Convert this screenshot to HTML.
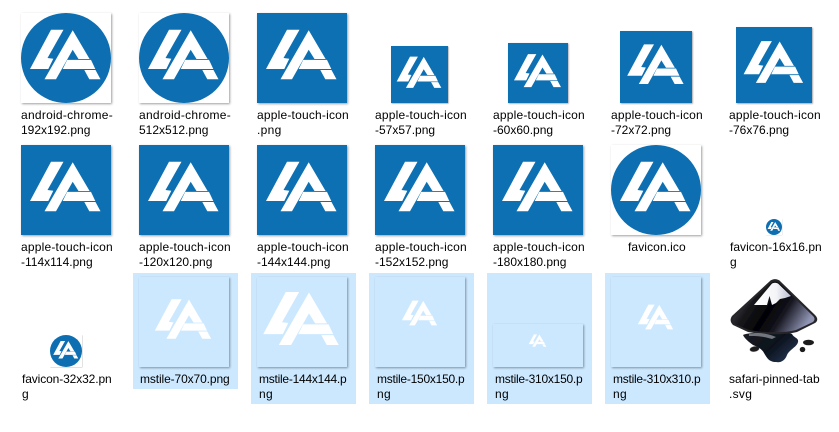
<!DOCTYPE html>
<html><head><meta charset="utf-8"><style>
html,body{margin:0;padding:0;background:#fff;width:839px;height:432px;overflow:hidden}
svg{display:block}
text{font-family:"Liberation Sans",sans-serif;font-size:12px;letter-spacing:.3px;fill:#000}
text.d{letter-spacing:0}
</style></head><body>
<svg width="839" height="432" viewBox="0 0 839 432" xmlns="http://www.w3.org/2000/svg">
<defs>
<filter id="sh" x="-10%" y="-10%" width="125%" height="125%"><feDropShadow dx="1" dy="1" stdDeviation="1" flood-color="#000" flood-opacity=".38"/></filter>
<filter id="b" x="-5%" y="-5%" width="110%" height="110%"><feGaussianBlur stdDeviation=".35"/></filter>
<linearGradient id="dia" x1="0" y1=".2" x2="1" y2=".6"><stop offset="0" stop-color="#55555c"/><stop offset=".28" stop-color="#17171b"/><stop offset=".5" stop-color="#030305"/><stop offset=".68" stop-color="#14141e"/><stop offset="1" stop-color="#9095b4"/></linearGradient>
<linearGradient id="ink" x1="0" y1="0" x2="1" y2=".6"><stop offset="0" stop-color="#1d1d22"/><stop offset=".6" stop-color="#0a111c"/><stop offset="1" stop-color="#22324a"/></linearGradient>
<linearGradient id="snow" x1="0" y1="0" x2="1" y2="0"><stop offset="0" stop-color="#fff"/><stop offset=".6" stop-color="#f4f4f8"/><stop offset="1" stop-color="#b8bcd2"/></linearGradient>
<g id="lg" fill="#fff" filter="url(#b)">
<polygon points="30,16.7 42.5,16.7 26.5,45 32.3,45.7 27.3,56 9,56"/>
<polygon points="51.7,17.2 68.6,46 57.5,46 51.7,36.7 35,66.2 23.5,66.2"/>
<polygon points="46.2,46.9 70,46.9 74.3,56 41.7,56"/>
<polygon points="63.3,57 74.5,57 79.5,66.2 68.3,66.2"/>
</g>
<g id="ci"><rect width="90" height="90" fill="#fff" filter="url(#sh)"/><circle cx="45" cy="45" r="45" fill="#0d6fb2"/><use href="#lg"/></g>
<g id="sq"><rect width="90" height="90" fill="#0d6fb2" filter="url(#sh)"/><use href="#lg"/></g>
</defs>
<rect width="839" height="432" fill="#fff"/>

<use href="#ci" x="21" y="13"/>
<use href="#ci" x="139" y="13"/>
<use href="#sq" x="257" y="13"/>
<use href="#sq" transform="translate(391,46) scale(.6333)"/>
<use href="#sq" transform="translate(508,43) scale(.6667)"/>
<use href="#sq" transform="translate(620,31) scale(.8)"/>
<use href="#sq" transform="translate(736,27) scale(.8444)"/>

<use href="#sq" x="21" y="145"/>
<use href="#sq" x="139" y="145"/>
<use href="#sq" x="257" y="145"/>
<use href="#sq" x="375" y="145"/>
<use href="#sq" x="493" y="145"/>
<use href="#ci" x="611" y="145"/>
<g transform="translate(766,219) scale(.1778)"><use href="#ci"/></g>
<g transform="translate(50,335) scale(.3556)"><use href="#ci"/></g>

<rect x="133" y="273" width="105" height="116" fill="#cce8ff"/>
<rect x="251" y="273" width="105" height="131" fill="#cce8ff"/>
<rect x="369" y="273" width="105" height="131" fill="#cce8ff"/>
<rect x="487" y="273" width="105" height="131" fill="#cce8ff"/>
<rect x="605" y="273" width="105" height="131" fill="#cce8ff"/>

<rect x="139" y="277" width="90" height="90" fill="#cce8ff" filter="url(#sh)"/>
<rect x="257" y="277" width="90" height="90" fill="#cce8ff" filter="url(#sh)"/>
<rect x="375" y="277" width="90" height="90" fill="#cce8ff" filter="url(#sh)"/>
<rect x="493" y="324" width="90" height="43" fill="#cce8ff" filter="url(#sh)"/>
<rect x="611" y="277" width="90" height="90" fill="#cce8ff" filter="url(#sh)"/>

<use href="#lg" transform="translate(183,319) scale(.8) translate(-44.25,-41.45)"/>
<use href="#lg" transform="translate(301,318.5) scale(1.07) translate(-44.25,-41.45)"/>
<use href="#lg" transform="translate(419.5,313) scale(.5) translate(-44.25,-41.45)"/>
<use href="#lg" transform="translate(537.5,340.5) scale(.25) translate(-44.25,-41.45)"/>
<use href="#lg" transform="translate(655.5,317) scale(.5) translate(-44.25,-41.45)"/>

<!-- inkscape -->
<path d="M743,335 C748,332 785,330 792,334 C794,338 799,338 798,342 C797,347 790,349 787,355 C785,361 780,363 776,362 C769,362 767,358 764,353 C762,349 758,347 753,345 C749,342 745,339 743,335 Z" fill="url(#ink)" filter="url(#b)"/>
<path d="M770,281 C773,278.5 777,278.5 780,281 L815,315 C818,318 818,321 815,323 L797,332 C785,335 765,335 748,332 L733,325 C730,322 730,319 732,316 Z" fill="#26262b" filter="url(#b)"/>
<path d="M771,283 C773,281 777,281 779,283 L813,316 C815,318 815,320 813,322 L796,330 C785,333 765,333 749,330 L735,324 C733,322 733,319 734,317 Z" fill="url(#dia)" filter="url(#b)"/>
<path d="M772,283.5 C774,282.5 776,282.5 778,283.5 L791,296 L785,298 L780,299 L776,303 L772,305 L769.5,296 L767,305 L754,305 Z" fill="url(#snow)" filter="url(#b)"/>
<path d="M749,334 C757,332 767,333 776,337 L772,339 C762,336 756,336 749,336 Z" fill="#71757e" filter="url(#b)"/>
<ellipse cx="754.5" cy="349" rx="4.8" ry="2.6" fill="#1a1a1f" filter="url(#b)" transform="rotate(-10 754.5 349)"/>
<ellipse cx="808.5" cy="342.5" rx="5.5" ry="2.8" fill="#1a1a1f" filter="url(#b)"/>
<ellipse cx="802.5" cy="349.5" rx="2.8" ry="2.6" fill="#1a1a1f" filter="url(#b)"/>

<text x="21" y="119" textLength="92">android-chrome-</text><text x="21" y="134" class="d">192x192.png</text>
<text x="139" y="119" textLength="92">android-chrome-</text><text x="139" y="134" class="d">512x512.png</text>
<text x="257" y="119" textLength="92">apple-touch-icon</text><text x="257" y="134">.png</text>
<text x="375" y="119" textLength="92">apple-touch-icon</text><text x="375" y="134" class="d">-57x57.png</text>
<text x="493" y="119" textLength="92">apple-touch-icon</text><text x="493" y="134" class="d">-60x60.png</text>
<text x="611" y="119" textLength="92">apple-touch-icon</text><text x="611" y="134" class="d">-72x72.png</text>
<text x="729" y="119" textLength="92">apple-touch-icon</text><text x="729" y="134" class="d">-76x76.png</text>

<text x="21" y="251" textLength="92">apple-touch-icon</text><text x="21" y="266" class="d">-114x114.png</text>
<text x="139" y="251" textLength="92">apple-touch-icon</text><text x="139" y="266" class="d">-120x120.png</text>
<text x="257" y="251" textLength="92">apple-touch-icon</text><text x="257" y="266" class="d">-144x144.png</text>
<text x="375" y="251" textLength="92">apple-touch-icon</text><text x="375" y="266" class="d">-152x152.png</text>
<text x="493" y="251" textLength="92">apple-touch-icon</text><text x="493" y="266" class="d">-180x180.png</text>
<text x="628" y="251" textLength="58">favicon.ico</text>
<text x="730" y="251" textLength="92">favicon-16x16.pn</text><text x="730" y="266">g</text>

<text x="22" y="383" textLength="90">favicon-32x32.pn</text><text x="22" y="398">g</text>
<text x="140" y="383" textLength="90">mstile-70x70.png</text>
<text x="259" y="383" textLength="88">mstile-144x144.p</text><text x="259" y="398">ng</text>
<text x="377" y="383" textLength="88">mstile-150x150.p</text><text x="377" y="398">ng</text>
<text x="495" y="383" textLength="88">mstile-310x150.p</text><text x="495" y="398">ng</text>
<text x="613" y="383" textLength="88">mstile-310x310.p</text><text x="613" y="398">ng</text>
<text x="729" y="383" textLength="91">safari-pinned-tab</text><text x="729" y="398">.svg</text>
</svg>
</body></html>
